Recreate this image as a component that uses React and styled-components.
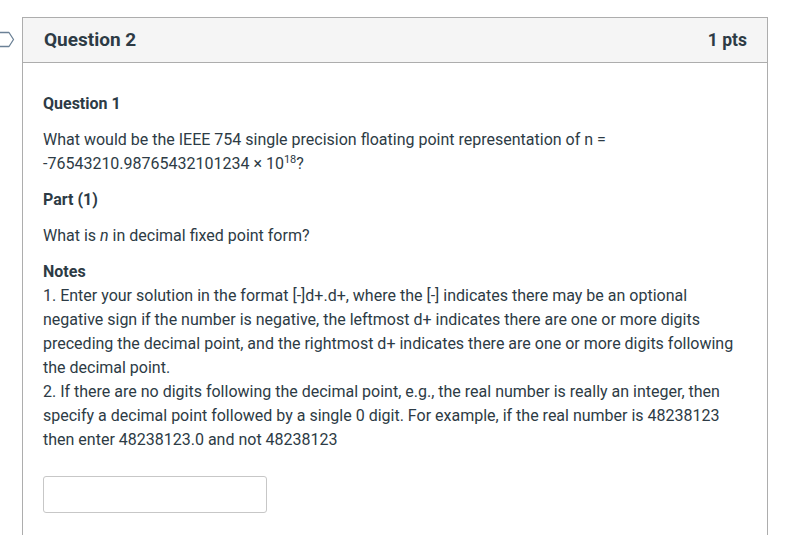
import React from "react";
import styled, { createGlobalStyle } from "styled-components";

const GlobalStyle = createGlobalStyle`
  html, body { margin: 0; padding: 0; background: #fff; }
  body {
    font-family: Roboto, "Liberation Sans", Arial, sans-serif;
    color: #2d3b45;
  }
`;

const Page = styled.div`
  position: relative;
  padding: 17px 33px 0 22px;
  height: 535px;
  box-sizing: border-box;
  overflow: hidden;
`;

const Flag = styled.svg`
  position: absolute;
  left: -6px;
  top: 31px;
  width: 21px;
  height: 17px;
`;

const Card = styled.div`
  border: 1px solid #adadad;
  border-bottom: none;
  background: #fff;
  min-height: 540px;
`;

const Header = styled.div`
  display: flex;
  justify-content: space-between;
  align-items: center;
  height: 44px;
  padding: 0 20px 0 21px;
  background: #f5f5f5;
  border-bottom: 1px solid #adadad;
`;

const Title = styled.h2`
  margin: 0 0 1px;
  font-size: 19px;
  font-weight: 700;
  color: #2d3b45;
`;

const Points = styled.span`
  font-size: 17.5px;
  font-weight: 700;
  color: #2d3b45;
`;

const Body = styled.div`
  padding: 29px 20px 0 20px;
  font-size: 16px;
  line-height: 24px;
`;

const Heading = styled.p`
  margin: 0 0 ${(p) => p.gap ?? 12}px;
  font-weight: 700;
`;

const Para = styled.p`
  margin: 0 0 ${(p) => p.gap ?? 12}px;
`;

const Sup = styled.sup`
  font-size: 11px;
  line-height: 0;
  vertical-align: 6px;
`;

const AnswerInput = styled.input`
  display: block;
  box-sizing: border-box;
  width: 224px;
  height: 37px;
  margin-top: 24px;
  border: 1px solid #c7c7c7;
  border-radius: 3px;
  background: #fff;
  padding: 0 8px;
  font: inherit;
`;

export default function App() {
  return (
    <>
      <GlobalStyle />
      <Page>
        <Flag viewBox="0 0 21 17">
          <path
            d="M0.5 1.5 H15 L19.5 8.5 L15 15.5 H0.5"
            fill="none"
            stroke="#6b8196"
            strokeWidth="1.3"
            strokeLinejoin="round"
          />
        </Flag>
        <Card>
          <Header>
            <Title>Question 2</Title>
            <Points>1 pts</Points>
          </Header>
          <Body>
            <Heading>Question 1</Heading>
            <Para>
              What would be the IEEE 754 single precision floating point representation of n =
              -76543210.98765432101234 × 10<Sup>18</Sup>?
            </Para>
            <Heading>Part (1)</Heading>
            <Para>
              What is <i>n</i> in decimal fixed point form?
            </Para>
            <Heading gap={0}>Notes</Heading>
            <Para>
              1. Enter your solution in the format [-]d+.d+, where the [-] indicates there may be an
              optional negative sign if the number is negative, the leftmost d+ indicates there are
              one or more digits preceding the decimal point, and the rightmost d+ indicates there
              are one or more digits following the decimal point.
              <br />
              2. If there are no digits following the decimal point, e.g., the real number is really
              an integer, then specify a decimal point followed by a single 0 digit. For example, if
              the real number is 48238123 then enter 48238123.0 and not 48238123
            </Para>
            <AnswerInput type="text" />
          </Body>
        </Card>
      </Page>
    </>
  );
}
